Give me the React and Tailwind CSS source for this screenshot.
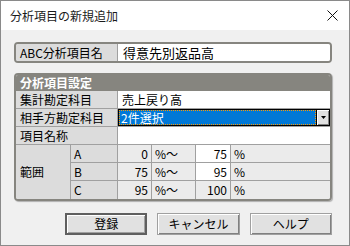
const font = { fontFamily: '"Noto Sans CJK JP", "Liberation Sans", sans-serif' };

function Cell({ className = "", children }) {
  return <div className={`flex items-center h-full ${className}`}>{children}</div>;
}

function Button({ label, primary }) {
  return (
    <button
      className={`w-[84px] h-[22px] bg-[#e1e1e1] text-[12px] text-black flex items-center justify-center ${
        primary
          ? "border-2 border-[#5f5f5f] shadow-[inset_1px_1px_#fff,inset_-1px_-1px_#a0a0a0]"
          : "border border-[#a0a0a0] shadow-[inset_1px_1px_#fff,inset_-1px_-1px_#808080]"
      }`}
    >
      {label}
    </button>
  );
}

const ranges = [
  { k: "A", from: "0", to: "75", edit: true },
  { k: "B", from: "75", to: "95", edit: true },
  { k: "C", from: "95", to: "100", edit: false },
];

export default function App() {
  return (
    <div style={font} className="w-[350px] h-[246px] flex flex-col border border-[#8a8a8a] bg-[#f0f0f0] text-[12px] text-black leading-none">
      {/* title bar */}
      <div className="h-[29px] bg-white flex items-center justify-between pl-[9px] pr-[11px]">
        <span className="text-[12px] text-[#1a1a1a]">分析項目の新規追加</span>
        <svg width="11" height="11" viewBox="0 0 11 11">
          <path d="M0.5 0.5 L10.5 10.5 M10.5 0.5 L0.5 10.5" stroke="#111" strokeWidth="1" />
        </svg>
      </div>

      <div className="flex flex-col pl-[13px] pr-[17px] pt-[12px]">
        {/* name */}
        <div className="h-[21px] flex rounded-[4px] border-2 border-[#86857f] overflow-hidden">
          <Cell className="w-[102px] bg-[#dcdcdc] pl-[4px] border-r border-[#a0a0a0]">ABC分析項目名</Cell>
          <Cell className="flex-1 bg-white pl-[5px] text-[13px]">得意先別返品高</Cell>
        </div>

        {/* settings group */}
        <div className="mt-[10px] rounded-[4px] border-2 border-[#86857f] overflow-hidden shadow-[1px_1px_1px_#b0b0b0]">
          <div className="h-[16px] bg-[#86857f] text-white font-bold pl-[4px] flex items-center">分析項目設定</div>

          <div className="h-[18px] flex border-b border-[#a0a0a0]">
            <Cell className="w-[102px] bg-[#dcdcdc] pl-[4px] border-r border-[#a0a0a0]">集計勘定科目</Cell>
            <Cell className="flex-1 bg-white pl-[4px]">売上戻り高</Cell>
          </div>

          <div className="h-[18px] flex border-b border-[#a0a0a0]">
            <Cell className="w-[102px] bg-[#dcdcdc] pl-[4px] border-r border-[#a0a0a0]">相手方勘定科目</Cell>
            <div className="flex-1 flex border border-black bg-white">
              <div className="flex-1 bg-[#0078d7] border border-dotted border-[#ff9a00] text-white flex items-center pl-[1px]">2件選択</div>
              <div className="w-[13px] bg-[#e1e1e1] border-l border-black flex items-center justify-center shadow-[inset_1px_1px_#fff,inset_-1px_-1px_#808080]">
                <svg width="5" height="3" viewBox="0 0 5 3"><path d="M0 0 H5 L2.5 3 Z" fill="#000" /></svg>
              </div>
            </div>
          </div>

          <div className="h-[18px] flex border-b border-[#a0a0a0]">
            <Cell className="w-[102px] bg-[#dcdcdc] pl-[4px] border-r border-[#a0a0a0]">項目名称</Cell>
            <Cell className="flex-1 bg-white" />
          </div>

          <div className="flex">
            <div className="w-[55px] bg-[#dcdcdc] border-r border-[#a0a0a0] flex items-center pl-[4px]">範囲</div>
            <div className="flex-1 flex flex-col">
              {ranges.map((r, i) => (
                <div key={r.k} className={`h-[18px] flex ${i < 2 ? "border-b border-[#a0a0a0]" : ""}`}>
                  <Cell className="w-[47px] bg-[#dcdcdc] pl-[3px] border-r border-[#a0a0a0]">{r.k}</Cell>
                  <Cell className="w-[34px] bg-[#ebebeb] justify-end pr-[3px] border-r border-[#a0a0a0]">{r.from}</Cell>
                  <Cell className="w-[44px] bg-[#ebebeb] pl-[3px] border-r border-[#a0a0a0]">%〜</Cell>
                  <Cell className={`w-[35px] justify-end pr-[3px] border-r border-[#a0a0a0] ${r.edit ? "bg-white" : "bg-[#ebebeb]"}`}>{r.to}</Cell>
                  <Cell className="flex-1 bg-[#ebebeb] pl-[3px]">%</Cell>
                </div>
              ))}
            </div>
          </div>
        </div>

        {/* buttons */}
        <div className="mt-[12px] flex gap-[10px] pl-[51px]">
          <Button label="登録" primary />
          <Button label="キャンセル" />
          <Button label="ヘルプ" />
        </div>
      </div>
    </div>
  );
}
